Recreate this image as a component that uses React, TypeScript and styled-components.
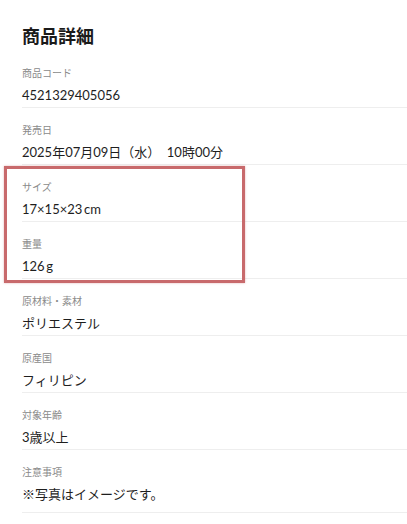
import React from "react";
import styled, { createGlobalStyle } from "styled-components";

const Global = createGlobalStyle`
  html, body { margin: 0; padding: 0; background: #fff; }
  body {
    font-family: Lato, "Noto Sans CJK JP", sans-serif;
    color: #222;
    -webkit-font-smoothing: antialiased;
  }
`;

const Page = styled.div`
  width: 407px;
  height: 524px;
  overflow: hidden;
  padding-left: 22px;
  box-sizing: border-box;
`;

const Title = styled.h2`
  margin: 23px 0 4px;
  font-size: 18px;
  line-height: 24px;
  font-weight: 700;
  color: #1a1a1a;
  font-family: "Noto Sans CJK JP", sans-serif;
`;

const List = styled.dl`
  margin: 0;
`;

const Group = styled.div`
  position: relative;
`;

const Highlight = styled.div`
  position: absolute;
  left: -18px;
  top: 1px;
  width: 241px;
  height: 117px;
  border: 3px solid #c86a6c;
  box-sizing: border-box;
  box-shadow: 0 0 2px rgba(200, 106, 108, 0.5);
  pointer-events: none;
`;

const Row = styled.div<{ $tall?: boolean }>`
  padding: 14px 0 ${(p) => (p.$tall ? 8 : 2)}px;
  border-bottom: 1px solid #eeeeee;
`;

const Label = styled.dt`
  font-size: 10px;
  line-height: 16px;
  color: #8a8a8a;
  font-family: "Noto Sans CJK JP", sans-serif;
`;

const Value = styled.dd`
  margin: 4px 0 0;
  font-size: 13px;
  line-height: 20px;
  color: #1e1e1e;
  font-family: Lato, "Noto Sans CJK JP", sans-serif;
`;

type Item = { label: string; value: string };

const Field = ({ label, value, tall }: Item & { tall?: boolean }) => (
  <Row $tall={tall}>
    <Label>{label}</Label>
    <Value>{value}</Value>
  </Row>
);

export default function App() {
  return (
    <>
      <Global />
      <Page>
        <Title>商品詳細</Title>
        <List>
          <Field label="商品コード" value="4521329405056" />
          <Field label="発売日" value="2025年07月09日（水）　10時00分" />
          <Group>
            <Field label="サイズ" value={"17×15×23\u2009cm"} />
            <Field label="重量" value={"126\u2009g"} />
            <Highlight />
          </Group>
          <Field label="原材料・素材" value="ポリエステル" />
          <Field label="原産国" value="フィリピン" />
          <Field label="対象年齢" value="3歳以上" />
          <Field label="注意事項" value="※写真はイメージです。" tall />
        </List>
      </Page>
    </>
  );
}
